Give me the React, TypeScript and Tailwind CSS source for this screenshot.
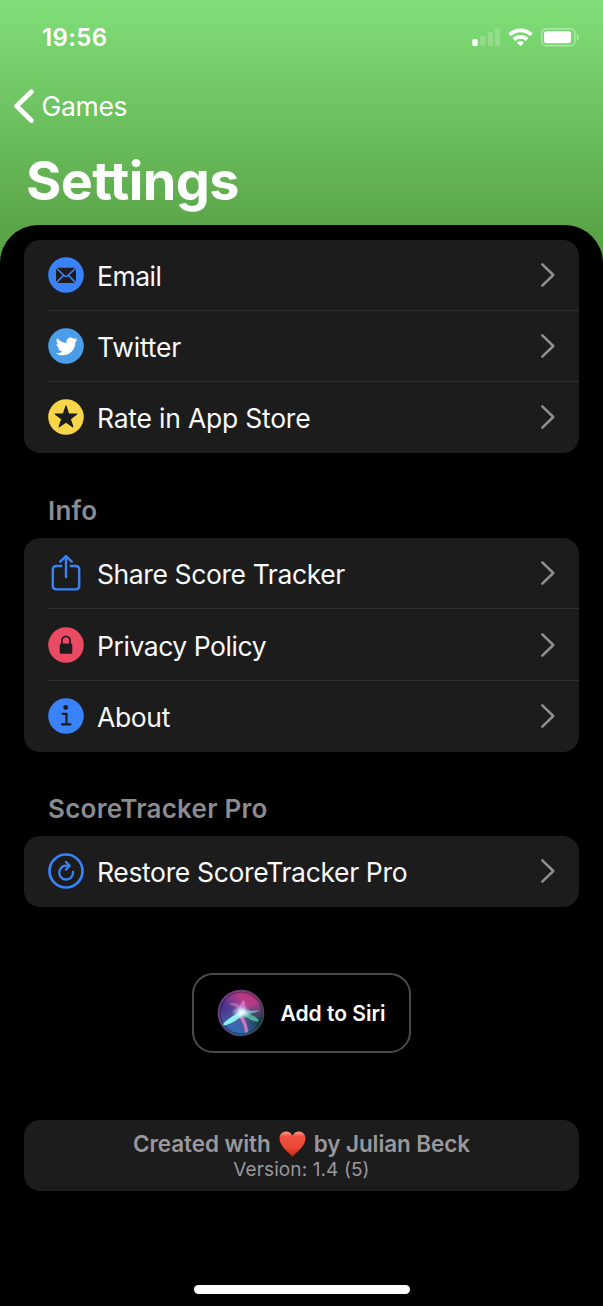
import type { ReactNode } from "react";
import { FaTwitter } from "react-icons/fa";

const DARK = "#1c1c1e";

function StatusBar() {
  return (
    <div className="flex h-[74px] items-center justify-between pr-[23px] pl-[42px]">
      <span className="pt-px text-[24px] leading-none font-semibold tracking-[0.4px]">19:56</span>
      <svg width="108" height="20" viewBox="0 0 108 20" fill="#fff">
        <rect x="0.3" y="12" width="5.4" height="7" rx="1.6" />
        <g opacity="0.2">
          <rect x="8.2" y="9" width="5" height="10" rx="1.5" />
          <rect x="15.8" y="5.2" width="5" height="13.8" rx="1.5" />
          <rect x="23" y="1.4" width="5" height="17.6" rx="1.5" />
        </g>
        <g fill="none" stroke="#fff" strokeWidth="3.8">
          <path d="M37.6 7.8a15.4 15.4 0 0 1 21.8 0" />
          <path d="M42 12.6a9.2 9.2 0 0 1 13 0" />
        </g>
        <path d="M48.5 19.3l-3.5-3.7a5 5 0 0 1 7 0z" />
        <rect x="69.7" y="1.7" width="33.4" height="17" rx="4.8" fill="none" stroke="#fff" strokeOpacity="0.4" strokeWidth="1.4" />
        <rect x="72" y="4.2" width="27" height="12" rx="2.6" />
        <path d="M105 7.2c2.3 1 2.3 5 0 6z" opacity="0.5" />
      </svg>
    </div>
  );
}

function Disc({ color, children }: { color: string; children: ReactNode }) {
  return (
    <svg width="36" height="36" viewBox="0 0 36 36">
      <circle cx="18" cy="18" r="17.8" fill={color} />
      {children}
    </svg>
  );
}

const mail = (
  <Disc color="#3a82f7">
    <rect x="8" y="10.7" width="20" height="15.3" rx="2.2" fill={DARK} />
    <path d="M8.4 11.2l7.8 7.4q1.8 1.6 3.6 0l7.8-7.4M8.4 25.6l6.9-7M27.6 25.6l-6.9-7" fill="none" stroke="#3a82f7" strokeWidth="1.5" />
  </Disc>
);

const twitter = (
  <Disc color="#4a9de9">
    <FaTwitter x="7.6" y="7.4" width="22" height="22" size={22} color="#fff" />
  </Disc>
);

const star = (
  <Disc color="#f8d549">
    <path d="M18 7l2.6 8h8.2l-6.6 4.9 2.6 7.9-6.8-4.9-6.8 4.9 2.6-7.9-6.6-4.9h8.2z" fill={DARK} stroke={DARK} strokeWidth="1.2" strokeLinejoin="round" />
  </Disc>
);

const share = (
  <svg width="36" height="36" viewBox="0 0 36 36" fill="none" stroke="#3a82f7" strokeWidth="2.4" strokeLinecap="round" strokeLinejoin="round">
    <path d="M13.2 11H8.4q-3.6 0-3.6 3.6v16.2q0 3.6 3.6 3.6h19.2q3.6 0 3.6-3.6V14.6q0-3.6-3.6-3.6h-4.8" />
    <path d="M18 22V1.6M12.3 6.7L18 1.1l5.7 5.6" />
  </svg>
);

const lock = (
  <Disc color="#ea4b62">
    <path d="M13.9 17v-3.2a4.1 4.4 0 0 1 8.2 0V17" fill="none" stroke={DARK} strokeWidth="1.7" />
    <rect x="11.7" y="16.4" width="12.6" height="10.4" rx="1.6" fill={DARK} />
  </Disc>
);

const info = (
  <Disc color="#3a82f7">
    <circle cx="17.7" cy="9.4" r="2.4" fill={DARK} />
    <path d="M14.5 15.8h4v10.3M13.9 26.3h8.6" fill="none" stroke={DARK} strokeWidth="2.2" strokeLinecap="round" strokeLinejoin="round" />
  </Disc>
);

const restore = (
  <svg width="36" height="36" viewBox="0 0 36 36" fill="none" stroke="#3a82f7" strokeLinecap="round" strokeLinejoin="round">
    <circle cx="18" cy="18" r="16.5" strokeWidth="2.7" />
    <path d="M21.2 12.7h-2.8a6.9 6.9 0 1 0 6.6 6.3" strokeWidth="2.3" />
    <path d="M17.9 8.9l3.8 3.9-3.8 3.8" strokeWidth="2.3" />
  </svg>
);

interface Item {
  icon: ReactNode;
  label: string;
  tracking: string;
}

function Card({ items }: { items: Item[] }) {
  return (
    <ul className="shrink-0 overflow-hidden rounded-[16px] bg-[#1c1c1d] pl-6">
      {items.map(({ icon, label, tracking }, i) => (
        <li
          key={label}
          className={`flex h-[71.25px] items-center border-b pt-[0.5px] pr-[23px] ${i < items.length - 1 ? "border-[#303032]" : "border-transparent"}`}
        >
          {icon}
          <span className={`ml-[13px] flex-1 pt-[2.5px] text-[26.5px] leading-none text-[#fafafa] ${tracking}`}>{label}</span>
          <svg width="16" height="26" viewBox="0 0 16 26" fill="none" stroke="#8f8f93" strokeWidth="2.5" strokeLinecap="round" strokeLinejoin="round">
            <path d="M2.3 2.3L13.3 13L2.3 23.7" />
          </svg>
        </li>
      ))}
    </ul>
  );
}

function SiriOrb() {
  return (
    <svg width="48" height="48" viewBox="0 0 48 48">
      <defs>
        <linearGradient id="orb" x1="0.65" y1="0" x2="0.35" y2="1">
          <stop offset="0" stopColor="#b23278" />
          <stop offset="0.3" stopColor="#b8408e" />
          <stop offset="0.55" stopColor="#5b5aa0" />
          <stop offset="1" stopColor="#2672bc" />
        </linearGradient>
        <radialGradient id="left" cx="0.08" cy="0.35" r="0.45">
          <stop offset="0" stopColor="#42308c" />
          <stop offset="1" stopColor="#42308c" stopOpacity="0" />
        </radialGradient>
        <radialGradient id="right" cx="0.95" cy="0.72" r="0.5">
          <stop offset="0" stopColor="#173f4a" />
          <stop offset="1" stopColor="#173f4a" stopOpacity="0" />
        </radialGradient>
        <linearGradient id="rim" x1="0" y1="0" x2="1" y2="0.7">
          <stop offset="0" stopColor="#7a3f9f" />
          <stop offset="0.5" stopColor="#6a4169" />
          <stop offset="1" stopColor="#285345" />
        </linearGradient>
        <radialGradient id="glow">
          <stop offset="0" stopColor="#fff" />
          <stop offset="0.4" stopColor="#dffcff" stopOpacity="0.7" />
          <stop offset="1" stopColor="#a5dcff" stopOpacity="0" />
        </radialGradient>
        <filter id="soft">
          <feGaussianBlur stdDeviation="0.5" />
        </filter>
      </defs>
      <circle cx="24" cy="24" r="22.5" fill="url(#orb)" />
      <circle cx="24" cy="24" r="22.5" fill="url(#left)" />
      <circle cx="24" cy="24" r="22.5" fill="url(#right)" />
      <circle cx="24" cy="24" r="20.8" fill="none" stroke="#211840" strokeOpacity="0.5" strokeWidth="1.3" />
      <circle cx="24" cy="24" r="22.6" fill="none" stroke="url(#rim)" strokeWidth="1.4" />
      <g filter="url(#soft)">
        <path d="M11 15c7-3 15 0 17 9l-4 1c-2-5-6-9-13-10z" fill="#d89be0" opacity="0.45" />
        <path d="M21 24c1-8 4-12 6-13 2 4 2 9 1 14z" fill="#e98fdc" opacity="0.6" />
        <path d="M24 21c6 1 12 1 18 0-4 4-11 4-17 4z" fill="#7fd0d8" opacity="0.7" />
        <path d="M25 22c5 2 15 5 17 10-5 2-11-3-18-7z" fill="#54cda1" opacity="0.8" />
        <path d="M23 24c5 5 8 13 8 19l-3 1c-1-8-3-13-8-18z" fill="#dc78c4" opacity="0.9" />
        <path d="M27 22C19 24 12 29 6 35l1 1.500c8-2 14-6 19-11z" fill="#8cf3ec" />
        <ellipse cx="24.5" cy="23.5" rx="10" ry="7" fill="url(#glow)" />
      </g>
    </svg>
  );
}

export default function App() {
  return (
    <div className="flex h-[1306px] w-[603px] flex-col overflow-hidden bg-[linear-gradient(to_bottom,#80df78_0px,#5ba649_225px,#55a043_264px)] font-[Inter,sans-serif] text-white antialiased">
      <header className="h-[225px] shrink-0">
        <StatusBar />
        <button className="flex h-[64px] items-center pl-[12px]">
          <svg width="22" height="36" viewBox="0 0 22 36" fill="none" stroke="#fff" strokeWidth="4.8" strokeLinecap="round" strokeLinejoin="round">
            <path d="M19.4 3.8L4.6 18l14.8 14.5" />
          </svg>
          <span className="ml-[7.5px] text-[26.5px] leading-none tracking-[-0.3px]">Games</span>
        </button>
        <h1 className="mt-[10.5px] pl-[26px] text-[54px] leading-[64px] font-bold tracking-[-0.6px]">Settings</h1>
      </header>

      <main className="flex flex-1 flex-col rounded-t-[38px] bg-black px-6 pt-[14.5px]">
        <Card
          items={[
            { icon: mail, label: "Email", tracking: "tracking-[-0.5px]" },
            { icon: twitter, label: "Twitter", tracking: "tracking-[-0.2px]" },
            { icon: star, label: "Rate in App Store", tracking: "tracking-[-0.22px]" },
          ]}
        />
        <h2 className="flex h-[84.75px] items-center pt-[30px] pl-6 text-[26px] leading-none font-semibold tracking-[0.25px] text-[#8b8b90]">Info</h2>
        <Card
          items={[
            { icon: share, label: "Share Score Tracker", tracking: "tracking-[-0.4px]" },
            { icon: lock, label: "Privacy Policy", tracking: "tracking-[-0.45px]" },
            { icon: info, label: "About", tracking: "tracking-[-0.35px]" },
          ]}
        />
        <h2 className="flex h-[84.25px] items-center pt-[29.5px] pl-6 text-[26px] leading-none font-semibold tracking-[0.25px] text-[#8b8b90]">ScoreTracker Pro</h2>
        <Card items={[{ icon: restore, label: "Restore ScoreTracker Pro", tracking: "tracking-[-0.35px]" }]} />

        <button className="mt-[66px] ml-[168px] flex h-[80px] w-[219px] items-center rounded-[21px] border-2 border-[#4b4b4c] pl-[23px]">
          <SiriOrb />
          <span className="ml-[15.5px] text-[21px] leading-none font-semibold">Add to Siri</span>
        </button>

        <footer className="mt-[67px] flex h-[71px] shrink-0 flex-col items-center rounded-[16px] bg-[#1c1c1d] pt-[10px] text-[#98989d]">
          <p className="flex h-[28px] items-center text-[22.5px] leading-none font-semibold tracking-[-0.08px]">
            Created with
            <svg className="mx-[8px]" width="27" height="26" viewBox="0 0 27 26">
              <defs>
                <linearGradient id="heart" x1="0" y1="0" x2="0" y2="1">
                  <stop offset="0" stopColor="#ff9a88" />
                  <stop offset="0.2" stopColor="#ef5140" />
                  <stop offset="0.65" stopColor="#ea4734" />
                  <stop offset="1" stopColor="#c02a18" />
                </linearGradient>
              </defs>
              <path d="M13.5 25.5C9 21 0.5 14.7 0.5 7.5 0.5 3.5 3.2 0.6 7 0.6c2.8 0 5.3 1.5 6.5 4.2C14.7 2.1 17.2 0.6 20 0.6c3.8 0 6.5 2.9 6.5 6.9 0 7.2-8.500 13.500-13 18z" fill="url(#heart)" />
            </svg>
            by Julian Beck
          </p>
          <p className="text-[19px] leading-[24px] tracking-[0.1px]">Version: 1.4 (5)</p>
        </footer>

        <div className="mt-auto mb-[12px] ml-[170px] h-[9px] w-[216px] rounded-full bg-white" />
      </main>
    </div>
  );
}
